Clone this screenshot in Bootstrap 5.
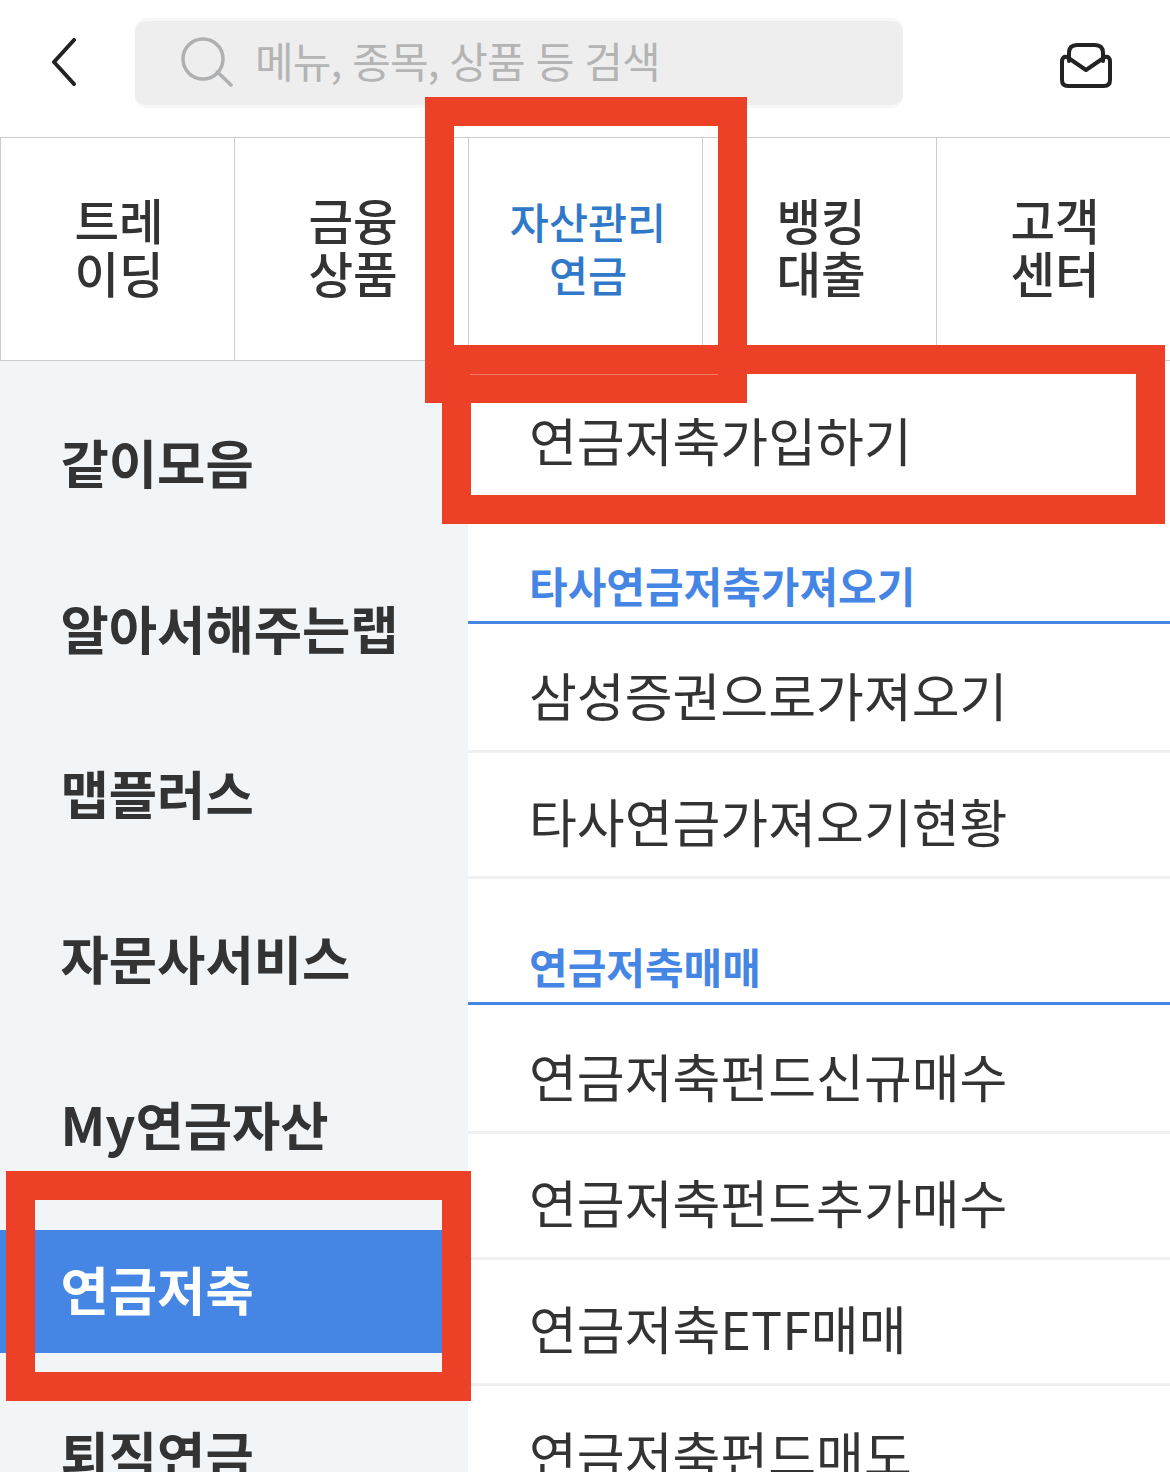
<!DOCTYPE html>
<html lang="ko">
<head>
  <meta charset="UTF-8" />
  <meta name="viewport" content="width=device-width, initial-scale=1" />
  <title>연금저축</title>
  <link href="https://cdn.jsdelivr.net/npm/bootstrap@5.3.3/dist/css/bootstrap.min.css" rel="stylesheet" />
  <style>
    body {
      font-family: "Noto Sans CJK KR", "Noto Sans", sans-serif;
      color: #333;
      height: 1472px;
      overflow: hidden;
      position: relative;
    }
    .top-bar { height: 137px; padding: 18px 56px 0 52px; }
    .back-icon { margin-top: 20px; }
    .mail-icon { margin-top: 22px; }
    .search-box {
      width: 768px;
      height: 90px;
      margin-left: 59px;
      margin-right: auto;
      padding-left: 45px;
      gap: 21px;
      background: #eee;
      border-top: 3px solid #f7f7f7;
      border-bottom: 3px solid #f7f7f7;
      border-radius: 12px;
      color: #b4b4b4;
      font-size: 42px;
      letter-spacing: -.9px;
    }
    .search-box svg { margin-bottom: 2px; }
    .search-box span { padding-bottom: 8px; }
    .tab-row { height: 224px; border-top: 1px solid #ccc; border-bottom: 1px solid #ccc; }
    .tab-cell {
      width: 234px;
      border-left: 1px solid #ccc;
      font-size: 48.5px;
      font-weight: 500;
      line-height: 53px;
      padding: 0 0 6px 3px;
    }
    .tab-cell.on {
      width: 235px;
      height: 223px;
      background: #fff;
      border-right: 1px solid #ccc;
      color: #3079c9;
      font-size: 42.5px;
      margin-right: -1px;
      padding-left: 5px;
      position: relative;
    }
    .side-menu { width: 468px; height: 1111px; background: #f2f5f8; padding-top: 42px; }
    .side-item {
      height: 123px;
      margin-bottom: 42.4px;
      padding: 0 0 6px 60.5px;
      font-size: 52.5px;
      font-weight: 700;
    }
    .side-item.on { background: #4586e5; color: #fff; }
    .sub-menu { flex: 1; }
    .sub-item {
      height: 126px;
      padding: 13px 0 0 61px;
      border-bottom: 3px solid #f0f0f0;
      font-size: 52px;
      font-weight: 400;
    }
    .sub-head + .sub-item { height: 129px; padding-top: 16px; }
    .sub-item.first { height: 145px; padding-top: 12px; border-bottom: 0; }
    .sub-head {
      height: 126px;
      padding: 0 0 5px 61px;
      border-bottom: 3px solid #4586e5;
      color: #4586e5;
      font-size: 42px;
      font-weight: 700;
    }
    .sub-item.first + .sub-head { height: 118px; }
    .mark-box { position: absolute; border: 29px solid #ec4126; }
    .mark-tab { left: 425px; top: 97px; width: 322px; height: 306px; border-bottom-width: 58px; }
    .mark-tab::after {
      content: "";
      position: absolute;
      left: 16px;
      right: 0;
      bottom: -30px;
      height: 1px;
      background: rgba(255, 255, 255, .3);
    }
    .mark-join { left: 442px; top: 345px; width: 723px; height: 179px; }
    .mark-side { left: 6px; top: 1171px; width: 465px; height: 230px; }
  </style>
</head>
<body>

<!-- top bar -->
<div class="top-bar d-flex align-items-start">
  <svg class="back-icon flex-shrink-0" width="24" height="48" viewBox="0 0 24 48" fill="none" stroke="#222" stroke-width="4" stroke-linecap="round" stroke-linejoin="round"><path d="M22 2 2 24l20 22"/></svg>
  <div class="search-box d-flex align-items-center">
    <svg width="54" height="50" viewBox="0 0 54 50" fill="none" stroke="#aeb0b2" stroke-width="3.5" stroke-linecap="round"><circle cx="23" cy="22" r="20"/><path d="m37.5 35 13.5 13"/></svg>
    <span>메뉴, 종목, 상품 등 검색</span>
  </div>
  <svg class="mail-icon flex-shrink-0" width="56" height="50" viewBox="0 0 56 50" fill="none" stroke="#222" stroke-width="4" stroke-linejoin="round" stroke-linecap="round"><path d="M4 22V40Q4 46 10 46H46Q52 46 52 40V22Q52 16 47 17L28 30 9 17Q4 16 4 22Z"/><path d="M11 21V13Q11 5 19 5H37Q45 5 45 13V21"/></svg>
</div>

<!-- main tabs -->
<div class="tab-row d-flex">
  <div class="tab-cell d-flex align-items-center justify-content-center text-center">트레<br>이딩</div>
  <div class="tab-cell d-flex align-items-center justify-content-center text-center">금융<br>상품</div>
  <div class="tab-cell on d-flex align-items-center justify-content-center text-center">자산관리<br>연금</div>
  <div class="tab-cell d-flex align-items-center justify-content-center text-center">뱅킹<br>대출</div>
  <div class="tab-cell d-flex align-items-center justify-content-center text-center">고객<br>센터</div>
</div>

<div class="d-flex">
  <!-- left menu -->
  <div class="side-menu flex-shrink-0">
    <div class="side-item d-flex align-items-center">같이모음</div>
    <div class="side-item d-flex align-items-center">알아서해주는랩</div>
    <div class="side-item d-flex align-items-center">맵플러스</div>
    <div class="side-item d-flex align-items-center">자문사서비스</div>
    <div class="side-item d-flex align-items-center">My연금자산</div>
    <div class="side-item on d-flex align-items-center">연금저축</div>
    <div class="side-item d-flex align-items-center">퇴직연금</div>
  </div>

  <!-- right menu -->
  <div class="sub-menu">
    <div class="sub-item first d-flex align-items-center">연금저축가입하기</div>
    <div class="sub-head d-flex align-items-end">타사연금저축가져오기</div>
    <div class="sub-item d-flex align-items-center">삼성증권으로가져오기</div>
    <div class="sub-item d-flex align-items-center">타사연금가져오기현황</div>
    <div class="sub-head d-flex align-items-end">연금저축매매</div>
    <div class="sub-item d-flex align-items-center">연금저축펀드신규매수</div>
    <div class="sub-item d-flex align-items-center">연금저축펀드추가매수</div>
    <div class="sub-item d-flex align-items-center">연금저축ETF매매</div>
    <div class="sub-item d-flex align-items-center">연금저축펀드매도</div>
  </div>
</div>

<!-- red annotation boxes -->
<div class="mark-box mark-side"></div>
<div class="mark-box mark-join"></div>
<div class="mark-box mark-tab"></div>

<script src="https://cdn.jsdelivr.net/npm/bootstrap@5.3.3/dist/js/bootstrap.bundle.min.js"></script>
</body>
</html>
